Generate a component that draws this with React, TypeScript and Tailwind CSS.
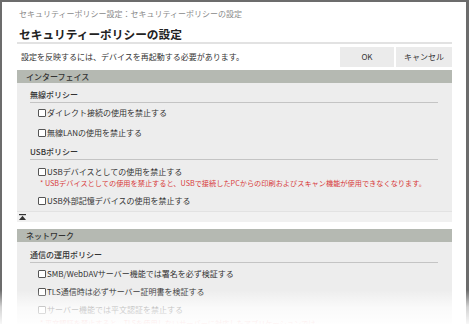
const font = { fontFamily: '"Noto Sans CJK JP", "Noto Sans", sans-serif' };

const Check = ({ label }: { label: string }) => (
  <div className="flex items-center pl-[8px]">
    <span className="w-[8px] h-[8px] border border-[#555] bg-white rounded-[1px] mr-[1px] shrink-0" />
    <span>{label}</span>
  </div>
);

const SubTitle = ({ text, pt }: { text: string; pt: string }) => (
  <div className={`${pt} pb-[2px] border-b border-[#c4c4c4] font-medium text-[#333] leading-[10px]`}>
    {text}
  </div>
);

export default function App() {
  return (
    <div
      className="relative w-[469px] h-[324px] overflow-hidden bg-white text-[8px] text-[#333]"
      style={font}
    >
      <div className="h-full border-t-2 border-l-2 border-r-[3px] border-[#6c6c6c] pl-[15px] pr-[14px]">
        {/* breadcrumb */}
        <div className="h-[24px] flex items-center pl-[2px] text-[#8a8a8a]">
          セキュリティーポリシー設定：セキュリティーポリシーの設定
        </div>
        <div className="h-[16px] flex items-center pl-[2px] text-[11.7px] font-bold text-[#222]">
          セキュリティーポリシーの設定
        </div>
        <div className="h-[2px] bg-[#e2e2e2]" />

        {/* message + buttons */}
        <div className="h-[26px] flex items-center justify-between">
          <span className="pl-[4px]">設定を反映するには、デバイスを再起動する必要があります。</span>
          <div className="flex gap-[2px]">
            <button className="w-[54px] h-[20px] bg-[#ebebeb] text-[#333]">OK</button>
            <button className="w-[56px] h-[20px] bg-[#ebebeb] text-[#333]">キャンセル</button>
          </div>
        </div>

        {/* interface */}
        <div className="h-[13px] bg-[#b5b9b2] flex items-center pl-[9px] pt-[1px] font-medium text-[#333]">
          インターフェイス
        </div>
        <div className="bg-[#ededed]">
          <div className="pl-[13px] pr-[14px]">
            <SubTitle text="無線ポリシー" pt="pt-[7px]" />
            <div className="h-[20px] flex items-center">
              <Check label="ダイレクト接続の使用を禁止する" />
            </div>
            <div className="h-[20px] flex items-center">
              <Check label="無線LANの使用を禁止する" />
            </div>
            <div className="pt-[4px] pb-[1px]">
              <SubTitle text="USBポリシー" pt="pt-0" />
            </div>
            <div className="pt-[4px] h-[18px] flex items-center">
              <Check label="USBデバイスとしての使用を禁止する" />
            </div>
            <div className="h-[8px] leading-[8px] pl-[10px] text-[7.2px] text-[#d83a3a]">
              * USBデバイスとしての使用を禁止すると、USBで接続したPCからの印刷およびスキャン機能が使用できなくなります。
            </div>
            <div className="mt-[6px] h-[16px] flex items-center mb-[2px]">
              <Check label="USB外部記憶デバイスの使用を禁止する" />
            </div>
          </div>
          <div className="h-[11px] border-t border-[#e2e2e2] bg-[#f1f1f1] flex items-center pl-[2px]">
            <svg width="7" height="6" viewBox="0 0 7 6">
              <rect x="0" y="0" width="7" height="1.2" fill="#333" />
              <polygon points="3.5,1.8 7,6 0,6" fill="#333" />
            </svg>
          </div>
        </div>

        {/* network */}
        <div className="mt-[7px] h-[13px] bg-[#b5b9b2] flex items-center pl-[9px] pt-[1px] font-medium text-[#333]">
          ネットワーク
        </div>
        <div className="bg-[#ededed] pb-[10px]">
          <div className="pl-[13px] pr-[14px]">
            <SubTitle text="通信の運用ポリシー" pt="pt-[8px]" />
            <div className="pt-[2px]" />
            <div className="h-[18px] flex items-center">
              <Check label="SMB/WebDAVサーバー機能では署名を必ず検証する" />
            </div>
            <div className="h-[18px] flex items-center">
              <Check label="TLS通信時は必ずサーバー証明書を検証する" />
            </div>
            <div className="h-[18px] flex items-center">
              <Check label="サーバー機能では平文認証を禁止する" />
            </div>
            <div className="h-[8px] leading-[8px] pl-[10px] text-[7.2px] text-[#d83a3a]">
              * 平文認証を禁止すると、TLSを使用しないサーバーに対応したアプリケーションでは
            </div>
          </div>
        </div>
      </div>

      {/* bottom fade */}
      <div className="absolute left-0 right-0 bottom-0 h-[34px] bg-linear-to-b from-white/0 via-white/70 to-white/95" />
    </div>
  );
}
